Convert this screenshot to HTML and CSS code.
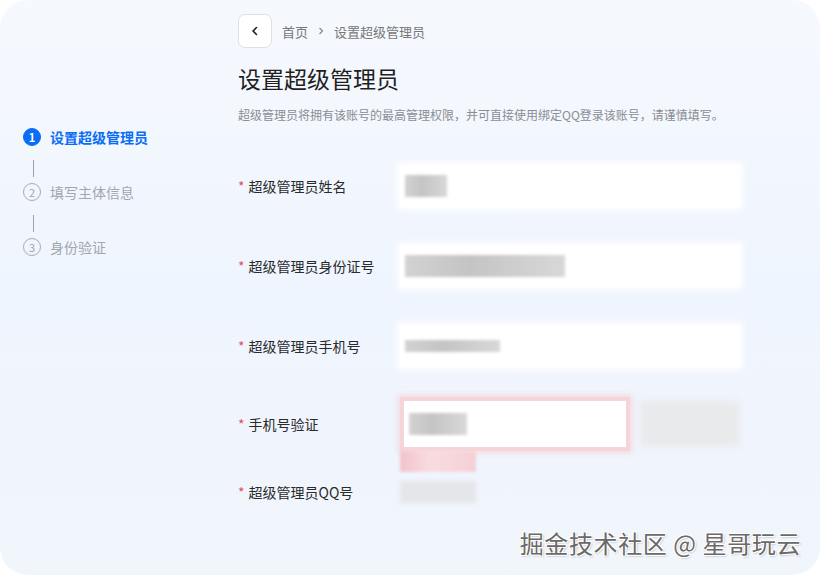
FILE: index.html
```html
<!DOCTYPE html>
<html lang="zh-CN">
<head>
    <meta charset="UTF-8">
    <title>设置超级管理员</title>
    <link rel="stylesheet" href="styles.css">
</head>
<body>
<div class="page">
    <div class="steps">
        <div class="step active"><span class="num">1</span><span>设置超级管理员</span></div>
        <div class="step-line"></div>
        <div class="step"><span class="num">2</span><span>填写主体信息</span></div>
        <div class="step-line"></div>
        <div class="step"><span class="num">3</span><span>身份验证</span></div>
    </div>

    <div class="main">
        <div class="crumbs">
            <button class="back-btn">
                <svg width="12" height="12" viewBox="0 0 12 12"><path d="M7.5 2.5 4 6l3.5 3.5" fill="none" stroke="#222" stroke-width="1.6" stroke-linecap="round" stroke-linejoin="round"/></svg>
            </button>
            <span>首页</span>
            <svg class="sep" width="10" height="10" viewBox="0 0 10 10"><path d="M3.5 2 6.5 5l-3 3" fill="none" stroke="#888" stroke-width="1.2"/></svg>
            <span>设置超级管理员</span>
        </div>

        <h1>设置超级管理员</h1>
        <p class="desc">超级管理员将拥有该账号的最高管理权限，并可直接使用绑定QQ登录该账号，请谨慎填写。</p>

        <div class="form">
            <div class="row">
                <label><i>*</i>超级管理员姓名</label>
                <div class="field"><span class="mask" style="width:42px"></span></div>
            </div>
            <div class="row">
                <label><i>*</i>超级管理员身份证号</label>
                <div class="field"><span class="mask" style="width:160px"></span></div>
            </div>
            <div class="row">
                <label><i>*</i>超级管理员手机号</label>
                <div class="field"><span class="mask thin" style="width:95px"></span></div>
            </div>
            <div class="row code-row">
                <label><i>*</i>手机号验证</label>
                <div class="code-wrap">
                    <div class="field error"><span class="mask" style="width:58px"></span></div>
                    <div class="send-btn"></div>
                </div>
            </div>
            <div class="err-msg"></div>
            <div class="row qq-row">
                <label><i>*</i>超级管理员QQ号</label>
                <div class="qq-field"></div>
            </div>
        </div>
    </div>

    <div class="watermark">掘金技术社区 @ 星哥玩云</div>
</div>
</body>
</html>
```

FILE: styles.css
```css
body {
    margin: 0;
    background: #fff;
    font-family: "Noto Sans CJK SC", "Noto Sans", sans-serif;
}

.page {
    position: relative;
    width: 820px;
    height: 575px;
    border-radius: 28px;
    overflow: hidden;
    background: linear-gradient(180deg, #f6f9fe 0%, #eff5fe 50%, #f1f5fc 100%);
    display: flex;
}

.steps {
    width: 238px;
    padding: 126px 0 0 23px;
    box-sizing: border-box;
}

.step {
    display: flex;
    align-items: center;
    gap: 9px;
    font-size: 14px;
    color: #a3a6ab;
    height: 22px;
}

.step .num {
    width: 16px;
    height: 16px;
    border: 1px solid #a9acb1;
    border-radius: 50%;
    font-size: 11px;
    display: flex;
    align-items: center;
    justify-content: center;
    color: #a3a6ab;
}

.step.active {
    color: #0a6df5;
    font-weight: bold;
}

.step.active .num {
    background: #0a6df5;
    border-color: #0a6df5;
    color: #fff;
    font-weight: bold;
}

.step-line {
    width: 1px;
    height: 17px;
    background: #9ea1a6;
    margin: 12px 0 4px 10px;
}

.main {
    flex: 1;
    padding-top: 15px;
}

.crumbs {
    display: flex;
    align-items: center;
    gap: 7px;
    font-size: 13px;
    color: #777;
    margin-top: -1px;
}

.back-btn {
    width: 34px;
    height: 34px;
    background: #fff;
    border: 1px solid #dcdfe4;
    border-radius: 7px;
    display: flex;
    align-items: center;
    justify-content: center;
    margin-right: 3px;
    padding: 0;
}

.crumbs .sep {
    margin: 0 1px;
}

h1 {
    font-size: 23px;
    font-weight: normal;
    color: #1f1f1f;
    margin: 15px 0 0;
    line-height: 30px;
}

.desc {
    font-size: 12px;
    color: #8a8d93;
    margin: 14px 0 0;
    line-height: 16px;
}

.form {
    margin-top: 41px;
}

.row {
    display: flex;
    align-items: center;
    height: 44px;
    margin-bottom: 36px;
}

.row label {
    width: 162px;
    font-size: 14px;
    color: #2a2a2a;
}

.row label i {
    font-style: normal;
    color: #e0505a;
    margin-right: 4px;
}

.field {
    width: 340px;
    height: 42px;
    background: #fff;
    box-shadow: 0 0 6px 3px rgba(255, 255, 255, 0.9);
    display: flex;
    align-items: center;
    padding-left: 5px;
    box-sizing: border-box;
}

.mask {
    height: 22px;
    background: linear-gradient(90deg, #d2d2d2, #c4c4c4 40%, #d8d8d8);
    filter: blur(1.5px);
}

.mask.thin {
    height: 12px;
}

.code-row {
    margin-top: -7px;
    margin-bottom: 0;
    height: 54px;
}

.code-wrap {
    display: flex;
    gap: 10px;
    align-items: center;
}

.field.error {
    width: 230px;
    height: 54px;
    border: 4px solid #f7d4d8;
    box-shadow: 0 0 6px 2px rgba(245, 200, 206, 0.6);
    padding-left: 5px;
}

.send-btn {
    width: 100px;
    height: 46px;
    background: #e9eaec;
    filter: blur(3px);
}

.err-msg {
    width: 76px;
    height: 21px;
    margin-left: 162px;
    background: linear-gradient(90deg, #f2c2ca, #f8dce0 40%, #f5d0d6);
    filter: blur(1.5px);
}

.qq-row {
    margin-top: 1px;
    height: 38px;
}

.qq-field {
    width: 76px;
    height: 22px;
    background: #e4e6ea;
    filter: blur(2px);
}

.watermark {
    position: absolute;
    right: 19px;
    bottom: 15px;
    font-size: 24px;
    color: #6a6a6a;
    letter-spacing: 0.6px;
    text-shadow: 1px 1px 0 #fff, -1px -1px 0 #fff, 1px -1px 0 #fff, -1px 1px 0 #fff, 1px 1px 2px #888;
}
```
